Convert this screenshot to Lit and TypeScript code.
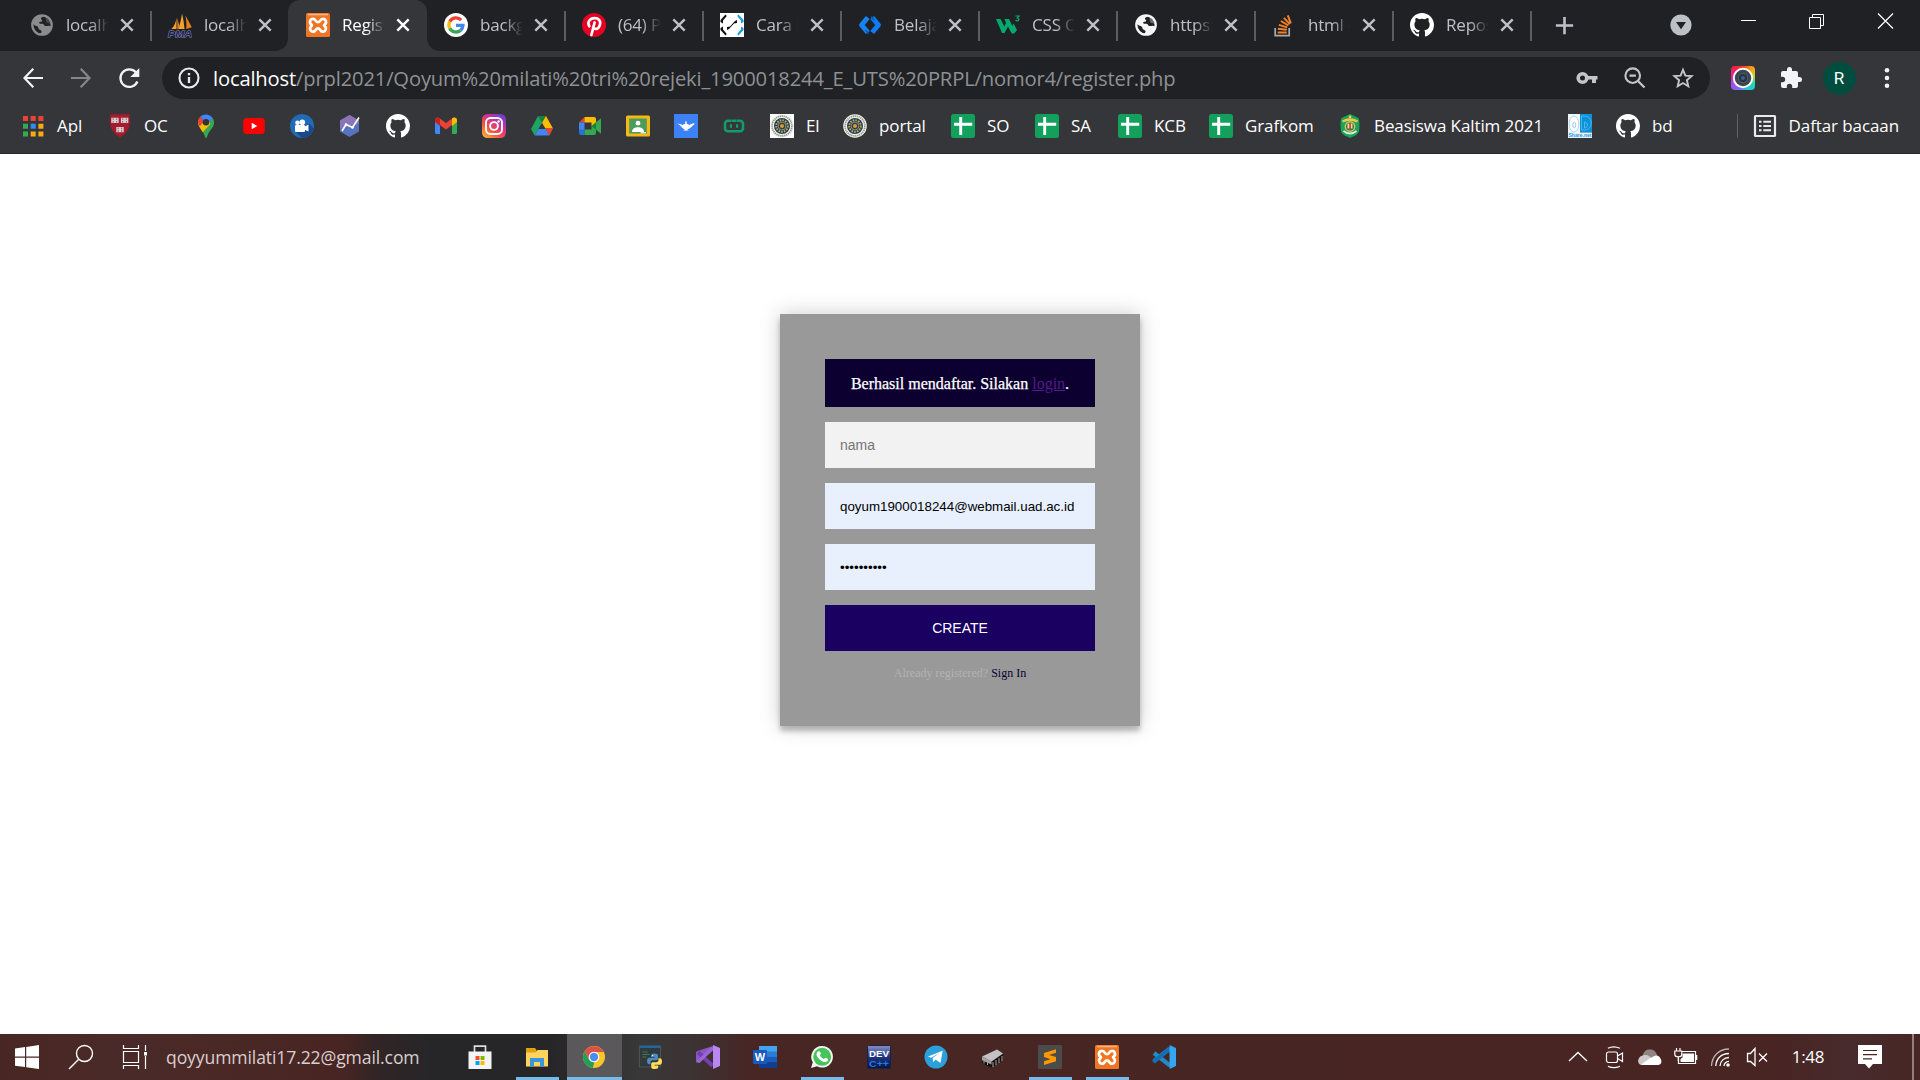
import { LitElement, html, svg, css, nothing } from "lit";
import { customElement, property } from "lit/decorators.js";
import { classMap } from "lit/directives/class-map.js";

const octocat = svg`<path transform="scale(1.5)" fill="#fff" d="M8 0C3.58 0 0 3.58 0 8c0 3.54 2.29 6.53 5.47 7.59.4.07.55-.17.55-.38 0-.19-.01-.82-.01-1.49-2.01.37-2.53-.49-2.69-.94-.09-.23-.48-.94-.82-1.13-.28-.15-.68-.52-.01-.53.63-.01 1.08.58 1.23.82.72 1.21 1.87.87 2.33.66.07-.52.28-.87.51-1.07-1.78-.2-3.64-.89-3.64-3.95 0-.87.31-1.59.82-2.15-.08-.2-.36-1.02.08-2.12 0 0 .67-.21 2.2.82a7.6 7.6 0 0 1 4 0c1.53-1.04 2.2-.82 2.2-.82.44 1.1.16 1.92.08 2.12.51.56.82 1.27.82 2.15 0 3.07-1.87 3.75-3.65 3.95.29.25.54.73.54 1.48 0 1.07-.01 1.93-.01 2.2 0 .21.15.46.55.38A8.01 8.01 0 0 0 16 8c0-4.42-3.58-8-8-8z"/>`;

const globe = (c: string) => svg`<circle cx="12" cy="12" r="9.700" fill="#202124" stroke="${c}" stroke-width="2.300"/>
  <path fill="${c}" d="M2.500 10.500C3 6 6.500 2.500 11 2.300L14 3c-.5 1-2.300 1-2.900 2-.6 1.200.5 1.500 1 2.200.6 1-.8 1.600-2 1.600-1 .1-1.200 1.200-.5 1.700.6.500 2.400-.1 3.600.6 1 .6.700 1.500 1.800 1.800 1 .3 2.500-.2 3.800-.2 1.300 0 1.200 1 2.800.8-.5 4-3.600 7.500-8 8.200-1.200-.1-2.800.2-4-.2 0-.9 1.500-1.500 1.900-2.600.3-1-.9-1.800-2-2.300-1-.5-1-1.800-1.500-2.700-.7-1.300-3.200-.7-5.500-3.400z"/>
  <path fill="${c}" d="M16 4l4 4 1.300 3.500c-1.300-.2-1.700-1.300-3-1.400-1.700-.1-2.300-1-2.300-2.200 0-1.400-1-2.300 0-3.900z" opacity=".35"/>`;

const xampp = svg`<rect width="24" height="24" rx="1.500" fill="#ef7522"/><rect x="2" y="0.800" width="20" height="1.500" fill="#fbb27c"/>
  <path d="M7.300 5.800c2.200 0 2.400 3.400 4.700 3.400s2.500-3.400 4.700-3.400a3.100 3.100 0 0 1 1.900 5.700c-.7.5-.7 1.100 0 1.600a3.100 3.100 0 0 1-1.900 5.600c-2.200 0-2.400-3.300-4.700-3.300s-2.500 3.300-4.700 3.300a3.100 3.100 0 0 1-1.900-5.600c.7-.5.7-1.100 0-1.600a3.100 3.100 0 0 1 1.900-5.700z" fill="none" stroke="#fff" stroke-width="2.700"/>`;

const seal = svg`<circle cx="12" cy="12" r="11.800" fill="#f3f1e6"/><circle cx="12" cy="12" r="9.900" fill="none" stroke="#8f9593" stroke-width="1.700" stroke-dasharray="1.300 .7"/>
  <circle cx="12" cy="12" r="8" fill="#1f3d63"/><circle cx="12" cy="12" r="5.800" fill="none" stroke="#cfae38" stroke-width="1.800" stroke-dasharray="1.600 1.100"/><circle cx="12" cy="12" r="3.900" fill="none" stroke="#b8a55a" stroke-width=".8"/><circle cx="12" cy="12" r="2" fill="#e09a2b"/>`;

const sheet = svg`<rect width="24" height="24" rx="2.500" fill="#12a05c"/><path d="M9.700 3v18M3 10.200h18.200" stroke="#fff" stroke-width="2.900" fill="none"/>`;

const ICONS: Record<string, unknown> = {
  globeGrey: globe("#8b8c8e"),
  globeWhite: globe("#f4f6f8"),
  pma: svg`<path fill="#f8a12c" d="M8.500 4.500v11.500H3.200c3-2.600 4.600-6 5.300-11.500zM14 .5c-.8 6-2 10.800-3.800 15.500h6.300C16 10 15.200 5 14 .5z"/><path fill="#e87f1d" d="M17.500 2.500l6.300 11.800-5.500 1.700c.4-5-.1-9-.8-13.500zM9.300 5l2.300 9-1.300 2H9.300z"/>
    <text x="0" y="23.500" textLength="24" lengthAdjust="spacingAndGlyphs" class="pma">PMA</text>`,
  xampp,
  google: svg`<circle cx="12" cy="12" r="12" fill="#fff"/><g fill="none" stroke-width="3.300"><path stroke="#ea4335" d="M17.200 7.100A7.100 7.100 0 0 0 5.700 8.800"/><path stroke="#fbbc05" d="M5.700 8.800a7.100 7.100 0 0 0 0 6.400"/><path stroke="#34a853" d="M5.700 15.200a7.100 7.100 0 0 0 11 2"/><path stroke="#4285f4" d="M16.700 17.200a7 7 0 0 0 2.300-4.900h-7"/></g>`,
  pinterest: svg`<circle cx="12" cy="12" r="12" fill="#e60023"/><path fill="none" stroke="#fff" stroke-width="2.700" stroke-linecap="round" d="M7.300 13.300C4.700 8.800 8.300 5.200 12.500 5.200c4.600 0 6.200 3 5.500 6-.7 3.200-2.600 4.900-4.600 4.700-1.200-.1-1.900-.7-2.300-1.600"/><path d="M12.600 9.500L9.400 22" stroke="#fff" stroke-width="2.700" stroke-linecap="round"/>`,
  cara: svg`<rect width="24" height="24" fill="#fff"/><g fill="#111"><path d="M5.500 1.500L6.800 3 3 7.500v3L.5 9V7zM.5 15L3 13.500v3L6.800 21l-1.300 1.500L.5 17zM7 14l3-.5 5-5.500 2-1v3l-3 .5-5 5.500-2 1z"/></g><path fill="#199bdc" d="M18.500 1.500L17.200 3 21 7.500v3L23.500 9V7zM23.500 15L21 13.500v3L17.200 21l1.300 1.500 5-5.500z"/>`,
  belajar: svg`<g fill="none" stroke-linejoin="round" stroke-linecap="butt" stroke-width="5"><path stroke="#1583f5" d="M9.800 4.500L3.600 12l6.200 7.500"/><path stroke="#0c7df2" d="M14.200 4.500l6.200 7.500-6.200 7.500"/></g><path d="M7.500 17l3 3.700M13.200 3.500l3.300 4" stroke="#0059bd" stroke-width="1.500"/>`,
  w3: svg`<path fill="#04aa6d" d="M0 6h4.500l3.800 7.500L10 10 8.500 6H13l3.300 7 1.300-2.500L21 17l-2.800 3.500h-2.500L12 13.500 8.500 20H6z"/><path d="M19.500 3h3.500l-1.800 2c3 .4 1.800 3.800-1.700 2.400" fill="none" stroke="#04aa6d" stroke-width="1.200"/>`,
  stack: svg`<path d="M3.200 15v7.700h14V15" fill="none" stroke="#a9abad" stroke-width="1.700"/><g stroke="#f58025" stroke-width="2"><path d="M5.700 19.500h9M5.900 15.700l8.900 1M6.800 11.900l8.400 2.500M8.900 8l7.500 4.500M11.900 4.900l5.900 6.200M15.800 2.300l3 8"/></g>`,
  github: octocat,
  apps: svg`<g><path fill="#ea4335" d="M2 2h5v5H2zM9.700 2h5v5h-5zM17.400 2h5v5h-5z"/><path fill="#34a853" d="M2 9.700h5v5H2zM2 17.400h5v5H2z"/><path fill="#2f8df4" d="M9.700 9.700h5v5h-5z"/><path fill="#f5ab13" d="M17.400 9.700h5v5h-5zM9.700 17.400h5v5h-5zM17.400 17.400h5v5h-5z"/></g>`,
  harvard: svg`<path fill="#a51c30" stroke="#5b2830" stroke-width=".8" d="M1.500 0h21c-1 3-.3 6-.6 10-.4 6.500-5 10.500-9.900 13.800C7.100 20.500 2.500 16.500 2.100 10 1.800 6 2.500 3 1.500 0z"/><g fill="#ddd1cf"><path d="M3.300 3.700h7.400v5.300H3.300zM12.900 3.700h7.400v5.300h-7.400zM8.300 13h7.400v5.300H8.300z"/></g><path d="M5.200 4.300v1.600M8.700 4.300v1.600M5.200 7v1.600M8.700 7v1.600M14.800 4.300v1.600M18.300 4.300v1.600M14.800 7v1.600M18.300 7v1.600M10.200 13.600v1.600M13.700 13.600v1.600M10.200 16.300v1.600M13.700 16.300v1.600" stroke="#8a5b60" stroke-width="1"/>`,
  maps: svg`<path fill="#34a853" d="M12 24c-.8 0-1-1.200-1.600-3-.9-2.400-2.200-4-3.900-6.300L18.900 4.200c2 4 1.400 7-1.100 10.300-2.400 3.200-3.500 4.500-4.200 6.800C13 23 12.800 24 12 24z"/><path fill="#fbbc04" d="M6.500 14.700C3.900 11.500 3.300 8.400 5 4.800l4.600 5.500 4.800-4.800 2 4.600-7.600 8.200z"/><path fill="#ea4335" d="M3.900 8.500A8.500 8.500 0 0 1 6.300 2.600l4 3.900-4.500 6z"/><path fill="#4285f4" d="M6.300 2.600a8.300 8.300 0 0 1 12.600 1.600l-5.700 6.400z"/><circle cx="12" cy="8.300" r="3.200" fill="#303338"/>`,
  youtube: svg`<rect x="1.200" y="4" width="21.600" height="16" rx="3.500" fill="#f00"/><path fill="#fff" d="M9.700 8.800v6.500l5.600-3.200z"/>`,
  movie: svg`<circle cx="12" cy="12" r="12" fill="#1f6bb8"/><path d="M19 9.500l4.500 5A12 12 0 0 1 12 24l-6-6z" fill="#17498c"/><g fill="#fff"><rect x="5" y="11" width="10" height="7" rx="1"/><circle cx="7.500" cy="8.800" r="2.300"/><circle cx="12.300" cy="8.200" r="2.800"/><path d="M14 13l4.500-2.500v7L14 15.500z"/></g>`,
  hex: svg`<path fill="#5873bd" d="M11.500 1l9.500 5.500v11L11.500 23 2 17.500v-11z"/><path fill="#8b75b5" d="M11.500 1l9.500 5.500v3L2 14.500v-8z"/><path d="M4 17l4-6.500 6.500 3L21 3.500" stroke="#fff" stroke-width="1.600" fill="none"/><circle cx="8" cy="10.500" r="1.300" fill="#fff"/><circle cx="14.500" cy="13.500" r="1.300" fill="#fff"/>`,
  gmail: svg`<path fill="#4285f4" d="M1 6v12.500c0 .9.700 1.500 1.500 1.500H6V11z"/><path fill="#34a853" d="M18 20h3.500c.9 0 1.500-.7 1.500-1.500V6l-5 5z"/><path fill="#ea4335" d="M1 6.500C1 3.500 4 3 5.600 4.200L12 9l6.400-4.800C20 3 23 3.500 23 6.500l-5 4.500-6 4.500L6 11z"/><path fill="#fbbc04" d="M18 4.500l.4-.3C20 3 23 3.500 23 6.500V8l-5 4z"/><path fill="#c5221f" d="M1 6.500C1 3.500 4 3 5.600 4.200l.4.300V12L1 8z"/>`,
  instagram: svg`<defs><linearGradient id="ig" x1="0" y1="1" x2=".8" y2="0"><stop offset="0" stop-color="#fdc23b"/><stop offset=".4" stop-color="#f4513f"/><stop offset=".7" stop-color="#c9319b"/><stop offset="1" stop-color="#6c3fd2"/></linearGradient></defs><rect width="24" height="24" rx="5.500" fill="url(#ig)"/><g fill="none" stroke="#fff" stroke-width="1.900"><rect x="4" y="4" width="16" height="16" rx="4.500"/><circle cx="12" cy="12" r="3.900"/></g><circle cx="16.600" cy="7.500" r="1.200" fill="#fff"/>`,
  drive: svg`<path fill="#1ea362" d="M8 2h4v6.700L4.700 21.500 1 15z"/><path fill="#188038" d="M8 2h8l-4 6.700z"/><path fill="#fbbc04" d="M16 2l7 12.500h-7.600L12 8.700z"/><path fill="#4285f4" d="M4.700 21.500L8.500 15H16l3.500 6.500z"/><path fill="#ea4335" d="M15.400 14.500H23l-3.500 7z"/>`,
  meet: svg`<path fill="#ea4335" d="M1 8.500L6.500 3v5.500z"/><path fill="#4285f4" d="M1 8.500h5.500V16H1z"/><path fill="#2a70db" d="M1 15.500h5.500V21H3a2 2 0 0 1-2-2z"/><path fill="#fbbc04" d="M6.500 3H16a2 2 0 0 1 2 2v7h-4.500V8.500h-7z"/><path fill="#34a853" d="M6.500 21v-5.500h7V12H18v7a2 2 0 0 1-2 2z"/><path fill="#188038" d="M13.500 12L18 8.300v7.400z"/><path fill="#34a853" d="M18 8.300l5-4v15.400l-5-4z"/>`,
  classroom: svg`<rect y="1.500" width="24" height="21" rx="1.500" fill="#f4b912"/><rect x="3.200" y="4.500" width="17.600" height="15" fill="#4b9a5e"/><circle cx="12" cy="9.200" r="2.400" fill="#fff"/><path fill="#fff" d="M6 18c0-3.500 3-4.700 6-4.700s6 1.200 6 4.700z"/><rect x="14.500" y="18" width="5.500" height="1.500" fill="#dde8e1"/>`,
  lamp: svg`<rect width="24" height="24" fill="#3d82f5"/><path fill="#fff" d="M3 9.500l3.200.6 2.500 1c.8-.9 1.800-1.200 2.600-1.400L11.200 8l.8-1 .8 1-.1 1.700c1 .2 2 .7 2.600 1.400 1.500-.4 2.500-1.800 4.700-1.800l.7.900c-2.300.5-2.800 3.300-5.600 4.500l-1.900.6 1.600 1.200H9.300l1.600-1.200c-3.400-.8-3-3.600-7.900-5.800z"/>`,
  link: svg`<path d="M9.500 6.800H6a3 3 0 0 0-3 3v4.400a3 3 0 0 0 3 3h4M14.500 6.800H18a3 3 0 0 1 3 3v4.400a3 3 0 0 1-3 3h-4M10 6.800h4M10 17.200h4" fill="none" stroke="#149b68" stroke-width="2.600"/><path d="M7.800 10.300H10v3.400H7.800zM14 10.300h2.200v3.400H14z" fill="#149b68"/>`,
  sealSquare: svg`<rect width="24" height="24" fill="#fff"/>${seal}`,
  seal,
  sheet,
  kaltim: svg`<path fill="#19a457" d="M12 0l8.500 4c1.300 2 1.200 12 0 14.500-1.500 2.500-5 4-8.500 5.500-3.500-1.500-7-3-8.500-5.500-1.200-2.500-1.300-12.500 0-14.500z"/><path d="M4.500 7.500Q12 3.500 19.500 7.500" stroke="#f2c84a" stroke-width="2.500" fill="none"/><circle cx="12" cy="2.900" r="1.300" fill="#f6d34d"/><circle cx="12" cy="12.500" r="4.700" fill="#317a3a" stroke="#d9c06a" stroke-width="1.400"/><path fill="#e8d9a5" d="M9.500 9.500h5v5h-5z"/><path fill="#d63b2f" d="M11.200 9h1.700v6.500h-1.700z"/><path d="M5.500 17q6.500 5 13 0" stroke="#dfead9" stroke-width="1.900" fill="none"/>`,
  share: svg`<path fill="#f2f7fa" d="M0 0h12v24H0z"/><path fill="#0b92dc" d="M12 0h12v18.500H12z"/><path fill="#e7f3fa" d="M0 18.500h24V24H0z"/><ellipse cx="6" cy="10" rx="4.800" ry="8" fill="#fff" stroke="#9dcbe6" stroke-width=".8"/><ellipse cx="6.300" cy="11" rx="1.500" ry="2.800" fill="none" stroke="#9dcbe6" stroke-width="1"/><path d="M13.500 2v14h3c9 0 9-14 0-14zM16.500 8v6c4 0 4-6 0-6z" fill="none" stroke="#63bde9" stroke-width=".8"/><text class="sharetext" x="0.500" y="23" textLength="23" lengthAdjust="spacingAndGlyphs">Share.net</text>`,
  reading: svg`<rect x="2" y="2" width="20" height="20" rx=".5" fill="none" stroke="#e8eaed" stroke-width="2.200"/><path d="M6 7.700h2.500M6 12h2.500M6 16.300h2.500M10.300 7.700H18M10.300 12H18M10.300 16.300H18" stroke="#e8eaed" stroke-width="2"/>`,
  close: svg`<path d="M6.300 6.300l11.400 11.400M17.700 6.300L6.300 17.700" stroke="currentColor" stroke-width="2.400"/>`,
  plus: svg`<path d="M12 3v18M3 12h18" stroke="#bdc1c6" stroke-width="2.700"/>`,
  dropdown: svg`<circle cx="12" cy="12" r="10.600" fill="#bdc1c6"/><path fill="#202124" d="M7 9h10l-5 7.200z"/>`,
  minimize: svg`<path d="M5 11.500h15" stroke="#fff" stroke-width="1"/>`,
  restore: svg`<path d="M4.500 8.500h11v11h-11zM7.500 8.500v-3h11v11h-3" fill="none" stroke="#fff" stroke-width="1"/>`,
  winclose: svg`<path d="M4 4.500l15 15M19 4.500l-15 15" stroke="#fff" stroke-width="1.200"/>`,
  back: svg`<path d="M12.300 2.700L3.500 12l8.800 9.300M3.500 12H22" fill="none" stroke="#f1f3f4" stroke-width="2.200"/>`,
  forward: svg`<path d="M11.700 2.700l8.800 9.300-8.800 9.300M20.500 12H2" fill="none" stroke="#84868a" stroke-width="2.200"/>`,
  reload: svg`<path d="M20.400 15.500a8.800 8.800 0 1 1-1.600-9.300" fill="none" stroke="#f1f3f4" stroke-width="2.300"/><path fill="#f1f3f4" d="M22.300 2v9h-9z"/>`,
  info: svg`<circle cx="12" cy="12" r="9.500" fill="none" stroke="#e8eaed" stroke-width="2.100"/><path d="M12 11v6M12 7v2.200" stroke="#e8eaed" stroke-width="2.300"/>`,
  key: svg`<circle cx="7.500" cy="12" r="4.300" fill="none" stroke="#c3c5c8" stroke-width="3.600"/><path fill="#c3c5c8" d="M12 10h10.500v3.600H21V17h-4v-3.400h-5z"/>`,
  zoom: svg`<circle cx="9.700" cy="9.700" r="7.300" fill="none" stroke="#c3c5c8" stroke-width="2.100"/><path d="M15 15l6.500 6.500M6.500 9.700h6.400" stroke="#c3c5c8" stroke-width="2.300"/>`,
  star: svg`<path d="M12 3.800l2.400 5.800 6.200.5-4.700 4.100 1.400 6.100-5.300-3.300-5.300 3.300 1.400-6.100-4.700-4.100 6.200-.5z" fill="none" stroke="#c3c5c8" stroke-width="1.900"/>`,
  camera: svg`<foreignObject width="24" height="24"><div class="spectrum"></div></foreignObject><circle cx="12" cy="12" r="9.200" fill="#3c4650" stroke="#fff" stroke-width="1.900"/><circle cx="12" cy="12" r="4.700" fill="#243443" stroke="#4c5764" stroke-width="1.200"/><circle cx="12" cy="12" r="2" fill="#3c6185"/>`,
  puzzle: svg`<path fill="#f1f3f4" d="M20.500 11H19V7a2 2 0 0 0-2-2h-4V3.500a2.500 2.500 0 0 0-5 0V5H4a2 2 0 0 0-2 2v3.800h1.500a2.700 2.700 0 0 1 0 5.400H2V20a2 2 0 0 0 2 2h3.800v-1.500a2.700 2.700 0 0 1 5.400 0V22H17a2 2 0 0 0 2-2v-4h1.500a2.500 2.500 0 0 0 0-5z"/>`,
  dots: svg`<g fill="#f1f3f4"><circle cx="12" cy="4.300" r="2.300"/><circle cx="12" cy="12" r="2.300"/><circle cx="12" cy="19.700" r="2.300"/></g>`,
  windows: svg`<path fill="#fff" d="M0 3.500l10-1.400v9.400H0zM11.200 1.900L24 0v11.500H11.200zM0 12.700h10v9.400L0 20.700zM11.200 12.700H24V24l-12.800-1.800z"/>`,
  search: svg`<circle cx="15.500" cy="8.500" r="8" fill="none" stroke="#fff" stroke-width="1.400"/><path d="M9.500 14.500L0 24" stroke="#fff" stroke-width="1.500"/>`,
  taskview: svg`<g fill="none" stroke="#fff" stroke-width="1.200"><path d="M.5 0v3.500h15V0M.5 24v-3.500h15V24M.5 6.500h15v11H.5zM22.500 0v6M22.500 11v13"/></g><path fill="#fff" d="M21 7h3v3.500h-3z"/>`,
  store: svg`<path d="M6.500 7V1.200h11V7" fill="none" stroke="#dcdcdc" stroke-width="1.700"/><path fill="#f4f4f4" d="M.5 6.500h23V24H.5z"/><path fill="#f25022" d="M7.500 11h4v4h-4z"/><path fill="#7fba00" d="M12.500 11h4v4h-4z"/><path fill="#00a4ef" d="M7.500 16h4v4h-4z"/><path fill="#ffb900" d="M12.500 16h4v4h-4z"/>`,
  explorer: svg`<path fill="#e2a10e" d="M1 3h9l1.500 2v5H1z"/><path fill="#ffd45e" d="M1 7.500h9.500l2-2.500H23v16.500H1z"/><path fill="#3b95dc" d="M5 21.500V13h14v8.500h-4V17H9v4.500z"/>`,
  chrome: svg`<circle cx="12" cy="12" r="11" fill="#fbc529"/><path fill="#dd5144" d="M2.500 6.500A11 11 0 0 1 21.600 7H12L7 14z"/><path fill="#1e9f5a" d="M2.500 6.500L7.300 15l5 2L10.800 23A11 11 0 0 1 2.500 6.500z"/><circle cx="12" cy="12" r="5.300" fill="#fff"/><circle cx="12" cy="12" r="4.200" fill="#4c8bf5"/>`,
  idle: svg`<path fill="#32393d" stroke="#565a5d" stroke-width=".8" d="M.5 1h21v21H.5z"/><path fill="#1c67a0" d="M.5 .7h21v2.300H.5z"/><path d="M3.500 7h5M3.500 9.500h7M3.500 12h4" stroke="#427c4e" stroke-width="1"/>
    <path fill="#4b8bbe" d="M15.500 8.500c-3 0-3.500 1-3.500 2.300V12h3.700v.8h-5.400c-1.700 0-2.300 1.400-2.300 3.300s.7 3.200 2.300 3.200h1.200v-1.800c0-1.300 1-2.200 2.200-2.200h3.500c1 0 1.800-.7 1.800-1.700v-2.800c0-1.500-1-2.300-3.500-2.300z"/>
    <path fill="#ffdf5a" d="M15.700 24c3 0 3.500-1 3.500-2.300v-1.200h-3.700v-.8h5.200c1.700 0 2.300-1.400 2.300-3.200s-.7-3.200-2.300-3.200h-1.200v1.700c0 1.300-1 2.200-2.200 2.200h-3.300c-1 0-1.800.7-1.800 1.700v2.800c0 1.500 1 2.300 3.500 2.300z"/><circle cx="13.600" cy="10.500" r=".7" fill="#fff"/>`,
  vs: svg`<path fill="#8b58c7" d="M1.500 6L0 7v10l1.500 1L4 17l14-14-1-2zM4 8.500L1.700 10v4L4 15.500z"/><path d="M2 7.200l14.500 13.500" stroke="#7140ae" stroke-width="4"/><path d="M2 17l15-14" stroke="#9a66d4" stroke-width="3.500"/><path fill="#b887f1" d="M17 0l7 3v18l-7 3z"/>`,
  word: svg`<path fill="#41a5ee" d="M6 1h18v6H6z"/><path fill="#2b7cd3" d="M6 6.500h18v6H6z"/><path fill="#185abd" d="M6 12h18v5.500H6z"/><path fill="#103f91" d="M6 17.500h18V23H6z"/><rect y="5" width="14" height="14" rx="1" fill="#185abd"/><text x="7" y="16" text-anchor="middle" class="glyph">W</text>`,
  whatsapp: svg`<path fill="#f5f7f5" d="M12 1a10.800 10.800 0 1 1-5 20.300L1 23l1.800-5.700A10.800 10.800 0 0 1 12 1z"/><circle cx="12.200" cy="11.800" r="9" fill="#46c45c"/><path fill="#fff" d="M8.300 6.300c1.500-.5 2 .8 2.600 2.200.2.700-.9 1.200-1 1.800.9 1.900 2 2.900 4 3.700.7-.3 1.100-1.500 1.800-1.300 1.700.7 2.700 1 2.300 2.200-.6 1.800-2.600 2.700-5 1.800-3-1.100-5.200-3.500-6.300-6.100-.6-1.700.3-3.800 1.600-4.300z"/>`,
  dev: svg`<defs><linearGradient id="dv" x1="0" y1="0" x2="0" y2="1"><stop stop-color="#8792c7"/><stop offset=".5" stop-color="#1e347f"/><stop offset="1" stop-color="#071444"/></linearGradient></defs><rect x=".5" y=".5" width="23" height="23" rx="1" fill="url(#dv)" stroke="#1d2140"/><text x="2" y="11.500" textLength="20" lengthAdjust="spacingAndGlyphs" class="devtop">DEV</text><text x="2" y="22" textLength="20" lengthAdjust="spacingAndGlyphs" class="devbot">C++</text>`,
  telegram: svg`<circle cx="12" cy="12" r="11.500" fill="#2ba0da"/><path fill="#fff" d="M4 11.500L18.700 5.700 16.500 18l-5-3.500-2.200 2.800-.7-4.300 7-5-8.500 4.800z"/>`,
  chip: svg`<path fill="#111" d="M1 13v5l9 4.500L22 15V9l-3 2-9 6z"/><path fill="#c2c2c2" d="M1 11.500L16 4.500l6 4-11.500 8z"/><path fill="#a2a2a2" d="M1 11.500l9.500 5v3L1 15.200z"/><path d="M3 16v2.500M6.500 17.500V20M12 17v5M15 15v5M18 13v5M21 11v5" stroke="#ccc" stroke-width=".8"/>`,
  sublime: svg`<rect width="24" height="24" rx="1" fill="#4b4b4b"/><path fill="#ff9800" d="M6 8l12-3.800v3.600L11 10l7 2v4.200L6 20v-3.800l6.500-2L6 12z"/>`,
  vscode: svg`<path d="M2 8l16 12.500M2 16L18 3.500" stroke="#2489ca" stroke-width="4.200"/><path fill="#1070b3" d="M0 15.500l2.500 3L17 7V2z"/><path fill="#32a6ee" d="M17.500 0L24 3v18l-6.500 3z"/>`,
  chevron: svg`<path d="M3 16l9-8.500 9 8.500" fill="none" stroke="#fff" stroke-width="1.300"/>`,
  meetnow: svg`<g fill="none" stroke="#fff" stroke-width="1.200"><rect x="4.500" y="7" width="11" height="10.500" rx="2"/><path d="M15.500 11l5-3v8.500l-5-3M6 3.300q5.500-3 12 0M6 21.200q5.500 3 12 0"/></g>`,
  cloud: svg`<path fill="#918381" d="M4.500 13C5 6 8 4.500 12 4.500c3.500 0 5.500 1.500 7 5.500v8h-14z"/><path fill="#cfc8c8" d="M3 20c-4-1-4-8 1.500-9.500C9 9 12 11 15 15v5z"/><path fill="#fff" d="M3.500 19.500C5 18 14 11 18 10.500c5 0 8 8.500 2.500 9.500H4z"/>`,
  battery: svg`<path fill="none" stroke="#fff" stroke-width="1.200" d="M8 6.500h13.500v12h-17V13"/><path fill="#fff" d="M8.500 8.500H20v8.500H6.500V14l2-1.500zM21.500 10h1.800v5h-1.800z"/><path d="M2.500 3v3M6 3v3M.8 6h7v3.500c0 3-7 3-7 0zM4.300 12v4" fill="none" stroke="#fff" stroke-width="1.200"/>`,
  wifi: svg`<g fill="none" stroke="#c1b2b1" stroke-width="1.300"><path d="M1.500 21C2 11 9 4 19 4"/><path stroke="#fff" d="M5.800 21C6 13.500 11.500 8.500 19 8.500M10 21c.3-5 4-8.500 9-8.500"/><path stroke="#fff" d="M14 21c.2-2.800 2-4.500 5-4.700"/></g><circle cx="18" cy="20" r="1.800" fill="#fff"/>`,
  mute: svg`<path d="M1.500 8.500v8h3l4.500 4v-17l-4.500 5z" fill="none" stroke="#fff" stroke-width="1.300"/><path d="M13 8.500l8 8M21 8.500l-8 8" stroke="#fff" stroke-width="1.300"/>`,
  notice: svg`<path fill="#fff" d="M0 0h24v19h-9l-4 4.500L7 19H0z"/><path d="M5 5.500h14M5 9.700h14M5 13.800h9" stroke="#482623" stroke-width="1.200"/>`,
};

@customElement("ui-icon")
export class UiIcon extends LitElement {
  @property() name = "";
  static styles = css`
    :host { display: block; width: 24px; height: 24px; flex: none; }
    svg { display: block; width: 100%; height: 100%; overflow: visible; }
    .pma { font: italic bold 9px "Liberation Sans", sans-serif; fill: #1c1e55; stroke: #8c8fb5; stroke-width: .8px; paint-order: stroke; }
    .sharetext { font: bold 6px "Liberation Sans", sans-serif; fill: #299ddb; }
    .glyph { font: bold 11px "Liberation Sans", sans-serif; fill: #fff; }
    .devtop { font: bold 9px/9px "Liberation Sans", sans-serif; fill: #fff; }
    .devbot { font: bold 9px/9px "Liberation Sans", sans-serif; fill: #1b7ee6; }
    .spectrum { width: 24px; height: 24px; border-radius: 4px; background: conic-gradient(from 0deg, #f33b20, #ff9a13, #c5d32c, #1fd6b0, #22c8dc, #7a6cf0, #a44bf0, #f01f9c, #f01f50, #f33b20); }
  `;
  render() {
    return html`<svg viewBox="0 0 24 24">${ICONS[this.name]}</svg>`;
  }
}

interface Tab { icon: string; title: string; active?: boolean; }
const TABS: Tab[] = [
  { icon: "globeGrey", title: "localhost" },
  { icon: "pma", title: "localhost" },
  { icon: "xampp", title: "Register", active: true },
  { icon: "google", title: "background" },
  { icon: "pinterest", title: "(64) Pinterest" },
  { icon: "cara", title: "Cara Membuat" },
  { icon: "belajar", title: "Belajar" },
  { icon: "w3", title: "CSS Object" },
  { icon: "globeWhite", title: "https://" },
  { icon: "stack", title: "html - how" },
  { icon: "github", title: "Repositories" },
];

@customElement("tab-strip")
export class TabStrip extends LitElement {
  static styles = css`
    :host { display: flex; height: 51px; background: #202124; padding-left: 13px; box-sizing: border-box; font: 17px/24px "Open Sans", sans-serif; }
    .tab { width: 138px; height: 51px; box-sizing: border-box; padding: 0 12px 2px 17px; display: flex; align-items: center; color: #bdc1c6; position: relative; }
    .title { margin-left: 12px; width: 43px; overflow: hidden; white-space: nowrap; letter-spacing: -.2px; -webkit-mask-image: linear-gradient(90deg, #000 24px, transparent 43px); mask-image: linear-gradient(90deg, #000 24px, transparent 43px); }
    .close { margin-left: 7px; }
    .sep::after { content: ""; position: absolute; right: -.5px; top: 11px; width: 1.500px; height: 30px; background: #5b5d61; }
    .active { background: #35363a; color: #fff; width: 139px; margin: 0 0 0 -1px; padding-left: 18px; border-radius: 12px 12px 0 0; }
    .active::before, .active::after { content: ""; position: absolute; bottom: 0; width: 12px; height: 12px; }
    .active::before { left: -12px; background: radial-gradient(circle at 0 0, #202124 11.500px, #35363a 12px); }
    .active::after { right: -12px; background: radial-gradient(circle at 100% 0, #202124 11.500px, #35363a 12px); }
    .new { width: 66px; display: flex; align-items: center; justify-content: center; padding-bottom: 1px; }
    .plus { width: 23px; height: 23px; }
    .controls { margin-left: auto; display: flex; }
    .drop { width: 64px; display: flex; align-items: center; justify-content: center; padding-bottom: 1px; }
    .win { width: 69px; height: 42px; display: flex; align-items: center; justify-content: center; }
  `;
  render() {
    return html`
      ${TABS.map((t, i) => html`<div class=${classMap({ tab: true, active: !!t.active, sep: !t.active && !TABS[i + 1]?.active })}>
        <ui-icon name=${t.icon}></ui-icon><span class="title">${t.title}</span><ui-icon class="close" name="close"></ui-icon>
      </div>`)}
      <div class="new"><ui-icon class="plus" name="plus"></ui-icon></div>
      <div class="controls">
        <div class="drop"><ui-icon name="dropdown"></ui-icon></div>
        ${["minimize", "restore", "winclose"].map((n) => html`<div class="win"><ui-icon name=${n}></ui-icon></div>`)}
      </div>`;
  }
}

@customElement("address-bar")
export class AddressBar extends LitElement {
  static styles = css`
    :host { display: flex; align-items: center; height: 54px; background: #35363a; padding: 0 9px; box-sizing: border-box; font: 20.200px/30px "Open Sans", sans-serif; }
    .cell { width: 48px; display: flex; justify-content: center; flex: none; }
    .box { flex: 1; height: 42px; margin: 0 9px; border-radius: 21px; background: #202124; display: flex; align-items: center; padding: 0 3px 0 15px; }
    .url { margin-left: 12px; flex: 1; color: #8e9194; white-space: nowrap; letter-spacing: -.17px; padding-bottom: 1px; }
    .host { color: #fff; }
    .avatar { width: 33px; height: 33px; border-radius: 50%; background: #004d40; color: #fff; text-align: center; font: 17px/33px Roboto, sans-serif; }
  `;
  cell(n: string) {
    return html`<div class="cell"><ui-icon name=${n}></ui-icon></div>`;
  }
  render() {
    return html`${["back", "forward", "reload"].map((n) => this.cell(n))}
      <div class="box"><ui-icon name="info"></ui-icon>
        <span class="url"><span class="host">localhost</span>/prpl2021/Qoyum%20milati%20tri%20rejeki_1900018244_E_UTS%20PRPL/nomor4/register.php</span>
        ${["key", "zoom", "star"].map((n) => this.cell(n))}
      </div>
      ${this.cell("camera")}${this.cell("puzzle")}
      <div class="cell"><div class="avatar">R</div></div>${this.cell("dots")}`;
  }
}

interface Bookmark { icon: string; label?: string; w?: number; }
const BOOKMARKS: Bookmark[] = [
  { icon: "apps", label: "Apl", w: 27 }, { icon: "harvard", label: "OC", w: 26 },
  { icon: "maps" }, { icon: "youtube" }, { icon: "movie" }, { icon: "hex" }, { icon: "github" }, { icon: "gmail" },
  { icon: "instagram" }, { icon: "drive" }, { icon: "meet" }, { icon: "classroom" }, { icon: "lamp" }, { icon: "link" },
  { icon: "sealSquare", label: "El", w: 13 }, { icon: "seal", label: "portal", w: 48 },
  { icon: "sheet", label: "SO", w: 24 }, { icon: "sheet", label: "SA", w: 23 }, { icon: "sheet", label: "KCB", w: 31 },
  { icon: "sheet", label: "Grafkom", w: 69 }, { icon: "kaltim", label: "Beasiswa Kaltim 2021", w: 170 },
  { icon: "share" }, { icon: "github", label: "bd", w: 22 },
];

@customElement("bookmark-bar")
export class BookmarkBar extends LitElement {
  static styles = css`
    :host { display: flex; align-items: center; gap: 24px; height: 49px; padding: 0 21px 7px; box-sizing: border-box; background: #35363a; border-bottom: 1px solid #27282a; color: #fff; font: 17px/24px "Open Sans", sans-serif; }
    .item { display: flex; align-items: center; gap: 12px; }
    .label { white-space: nowrap; letter-spacing: -.1px; }
    .reading { margin-left: auto; display: flex; align-items: center; height: 24px; border-left: 1.500px solid #5f6165; padding-left: 15px; gap: 12px; }
  `;
  render() {
    return html`${BOOKMARKS.map((b) => html`<div class="item"><ui-icon name=${b.icon}></ui-icon>${b.label
        ? html`<span class="label" style="width:${b.w}px">${b.label}</span>` : nothing}</div>`)}
      <div class="reading"><ui-icon name="reading"></ui-icon><span class="label">Daftar bacaan</span></div>`;
  }
}

@customElement("register-card")
export class RegisterCard extends LitElement {
  static styles = css`
    :host { display: flex; flex-direction: column; gap: 15px; box-sizing: border-box; width: 360px; height: 412px; padding: 45px; background: #999; box-shadow: 0 0 20px rgba(0,0,0,.2), 0 5px 5px rgba(0,0,0,.24); font-family: "Liberation Serif", serif; text-align: center; }
    .notice { height: 48px; box-sizing: border-box; padding-top: 1px; line-height: 48px; background: #0c0030; color: #fff; font-size: 16px; -webkit-text-stroke: .25px currentColor; }
    .login { color: #551a8b; -webkit-text-stroke: 0; }
    .field { height: 46px; box-sizing: border-box; padding: 0 15px; border: 0; outline: 0; border-radius: 0; background: #f2f2f2; color: #000; font: 14px "Liberation Sans", sans-serif; text-align: left; width: 100%; }
    .field::placeholder { color: #757575; }
    .filled { background: #e8f0fe; font-size: 13.330px; }
    .button { height: 46px; border: 0; padding: 0; background: #190061; color: #fff; font: 14px "Liberation Sans", sans-serif; }
    .message { margin: 0; font-size: 12px; line-height: 14px; color: #b3b3b3; }
    .signin { color: #0c0032; text-decoration: none; }
  `;
  render() {
    return html`<div class="notice">Berhasil mendaftar. Silakan <a class="login" href="#">login</a>.</div>
      <input class="field" placeholder="nama">
      <input class="field filled" .value=${"qoyum1900018244@webmail.uad.ac.id"}>
      <input class="field filled" type="password" .value=${"0123456789"}>
      <button class="button">CREATE</button>
      <p class="message">Already registered? <a class="signin" href="#">Sign In</a></p>`;
  }
}

interface TaskApp { icon: string; running?: boolean; active?: boolean; }
const APPS: TaskApp[] = [
  { icon: "store" }, { icon: "explorer", running: true }, { icon: "chrome", active: true }, { icon: "idle" }, { icon: "vs" },
  { icon: "word" }, { icon: "whatsapp", running: true }, { icon: "dev" }, { icon: "telegram" }, { icon: "chip" },
  { icon: "sublime", running: true }, { icon: "xampp", running: true }, { icon: "vscode" },
];

@customElement("task-bar")
export class TaskBar extends LitElement {
  static styles = css`
    :host { display: flex; height: 46px; color: #fff; font: 17px/24px "Open Sans", sans-serif;
      background: linear-gradient(90deg, #482623 0, #4a2a28 130px, #482523 340px, #302526 380px, #262628 430px, #262628 550px, #383838 640px, #3c3334 690px, #472624 750px, #482523 1780px, #482b2d 1850px, #472624 1920px); }
    .cell { width: 54px; display: flex; align-items: center; justify-content: center; }
    .account { width: 287px; padding-left: 4px; display: flex; align-items: center; font-size: 17.600px; letter-spacing: -.12px; color: #d8cfce; box-sizing: border-box; }
    .apps { display: flex; gap: 2px; margin-left: 4px; }
    .app { width: 55px; box-sizing: border-box; padding-top: 11px; display: flex; flex-direction: column; align-items: center; justify-content: space-between; }
    .icon { margin-right: 2px; }
    .app::after { content: ""; width: 43px; height: 3px; }
    .running::after { background: #76b9ed; }
    .active { background: #5a585a; }
    .active::after { width: 55px; background: #76b9ed; }
    .tray { margin-left: auto; display: flex; align-items: center; }
    .mini { width: 36px; display: flex; justify-content: center; }
    .clock { width: 66px; text-align: center; letter-spacing: -.3px; padding-right: 2px; box-sizing: border-box; }
    .notes { width: 56px; display: flex; justify-content: center; margin-right: 14px; }
    .edge { width: 8px; height: 46px; box-sizing: border-box; border-left: 2px solid #947f7e; }
  `;
  render() {
    return html`
      ${["windows", "search", "taskview"].map((n) => html`<div class="cell"><ui-icon name=${n}></ui-icon></div>`)}
      <div class="account">qoyyummilati17.22@gmail.com</div>
      <div class="apps">${APPS.map((a) => html`<div class=${classMap({ app: true, running: !!a.running, active: !!a.active })}><ui-icon class="icon" name=${a.icon}></ui-icon></div>`)}</div>
      <div class="tray">
        ${["chevron", "meetnow", "cloud", "battery", "wifi", "mute"].map((n) => html`<div class="mini"><ui-icon name=${n}></ui-icon></div>`)}
        <div class="clock">1:48</div>
        <div class="notes"><ui-icon name="notice"></ui-icon></div>
        <div class="edge"></div>
      </div>`;
  }
}

@customElement("app-root")
export class AppRoot extends LitElement {
  static styles = css`
    :host { display: flex; flex-direction: column; width: 1920px; height: 1080px; overflow: hidden; background: #fff; }
    .page { flex: 1; display: flex; justify-content: center; align-items: flex-start; padding-top: 160px; }
  `;
  render() {
    return html`<tab-strip></tab-strip><address-bar></address-bar><bookmark-bar></bookmark-bar>
      <main class="page"><register-card></register-card></main>
      <task-bar></task-bar>`;
  }
}
